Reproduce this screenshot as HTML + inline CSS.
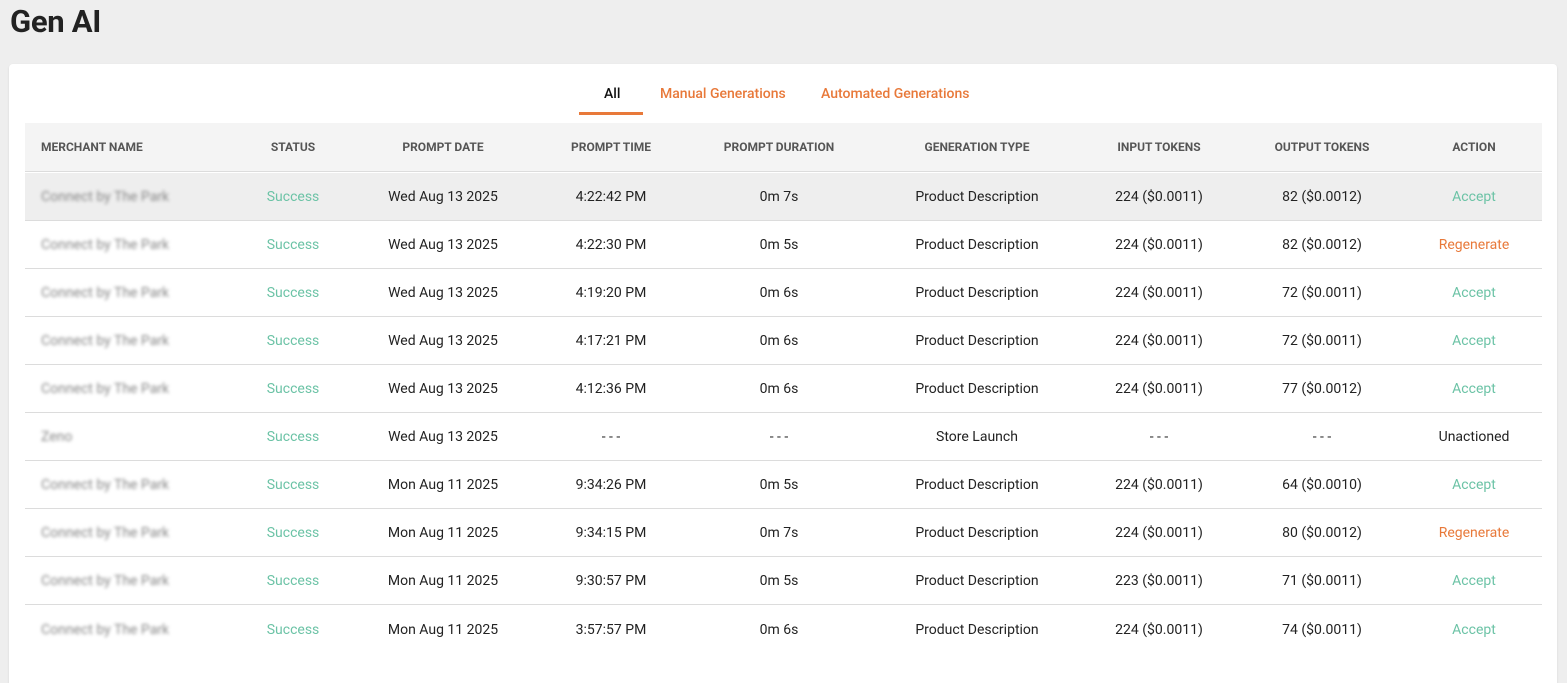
<!DOCTYPE html>
<html><head><meta charset="utf-8"><style>
*{margin:0;padding:0;box-sizing:border-box}
html,body{width:1567px;height:683px;overflow:hidden}
body{background:#eeeeee;font-family:"Roboto","Liberation Sans",sans-serif;position:relative}
h1{position:absolute;left:10px;top:3px;font-size:31px;font-weight:bold;color:#222;letter-spacing:-0.3px}
.card{position:absolute;left:9px;top:64px;width:1548px;height:619px;background:#fff;border-radius:4px 4px 0 0;box-shadow:0 1px 2px rgba(0,0,0,.1)}
.tab{position:absolute;top:86px;font-size:14px;color:#e8793a;font-weight:500}
.ul{position:absolute;left:579px;top:112px;width:64px;height:3px;background:#e8793a}
.hdr{position:absolute;left:25px;top:123px;width:1517px;height:49px;background:#f4f4f4;border-bottom:1px solid #dcdcdc}
.row{position:absolute;left:25px;width:1517px;height:48px;border-bottom:1px solid #dcdcdc}
.c{position:absolute;top:50%;transform:translate(-50%,-50%);white-space:nowrap;font-size:14px;color:#222}
.h .c{font-size:12px;font-weight:bold;color:#555}
.m{position:absolute;left:16px;top:50%;transform:translateY(-50%);font-size:14px;color:#888;filter:blur(1.6px)}
.g{color:#6cc3a6}.o{color:#e8793a}
</style></head><body>
<h1>Gen AI</h1>
<div class="card"></div>
<div class="tab" style="left:604px;color:#111">All</div>
<div class="ul"></div>
<div class="tab" style="left:660px">Manual Generations</div>
<div class="tab" style="left:821px">Automated Generations</div>
<div class="hdr h">
<span class="c" style="left:16px;transform:translateY(-50%)">MERCHANT NAME</span>
<span class="c" style="left:268px">STATUS</span>
<span class="c" style="left:418px">PROMPT DATE</span>
<span class="c" style="left:586px">PROMPT TIME</span>
<span class="c" style="left:754px">PROMPT DURATION</span>
<span class="c" style="left:952px">GENERATION TYPE</span>
<span class="c" style="left:1134px">INPUT TOKENS</span>
<span class="c" style="left:1297px">OUTPUT TOKENS</span>
<span class="c" style="left:1449px">ACTION</span>
</div>
<div id="rows"></div>
<script>
var d=[
["Connect by The Park","Wed Aug 13 2025","4:22:42 PM","0m 7s","Product Description","224 ($0.0011)","82 ($0.0012)","Accept"],
["Connect by The Park","Wed Aug 13 2025","4:22:30 PM","0m 5s","Product Description","224 ($0.0011)","82 ($0.0012)","Regenerate"],
["Connect by The Park","Wed Aug 13 2025","4:19:20 PM","0m 6s","Product Description","224 ($0.0011)","72 ($0.0011)","Accept"],
["Connect by The Park","Wed Aug 13 2025","4:17:21 PM","0m 6s","Product Description","224 ($0.0011)","72 ($0.0011)","Accept"],
["Connect by The Park","Wed Aug 13 2025","4:12:36 PM","0m 6s","Product Description","224 ($0.0011)","77 ($0.0012)","Accept"],
["Zeno","Wed Aug 13 2025","- - -","- - -","Store Launch","- - -","- - -","Unactioned"],
["Connect by The Park","Mon Aug 11 2025","9:34:26 PM","0m 5s","Product Description","224 ($0.0011)","64 ($0.0010)","Accept"],
["Connect by The Park","Mon Aug 11 2025","9:34:15 PM","0m 7s","Product Description","224 ($0.0011)","80 ($0.0012)","Regenerate"],
["Connect by The Park","Mon Aug 11 2025","9:30:57 PM","0m 5s","Product Description","223 ($0.0011)","71 ($0.0011)","Accept"],
["Connect by The Park","Mon Aug 11 2025","3:57:57 PM","0m 6s","Product Description","224 ($0.0011)","74 ($0.0011)","Accept"]];
var x=[418,586,754,952,1134,1297,1449],h="";
d.forEach(function(r,i){var top=173+i*48;var bg=i==0?"background:#eeeeee;":"";
h+='<div class="row" style="top:'+top+'px;'+(i==9?'height:49px;border-bottom:none;':'')+bg+'"><span class="m">'+r[0]+'</span><span class="c g" style="left:268px">Success</span>';
for(var j=1;j<8;j++){var cl=j==7?(r[7]=="Accept"?" g":r[7]=="Regenerate"?" o":""):"";h+='<span class="c'+cl+'" style="left:'+x[j-1]+'px">'+r[j]+'</span>';}
h+='</div>';});
document.getElementById("rows").innerHTML=h;
</script>
</body></html>
